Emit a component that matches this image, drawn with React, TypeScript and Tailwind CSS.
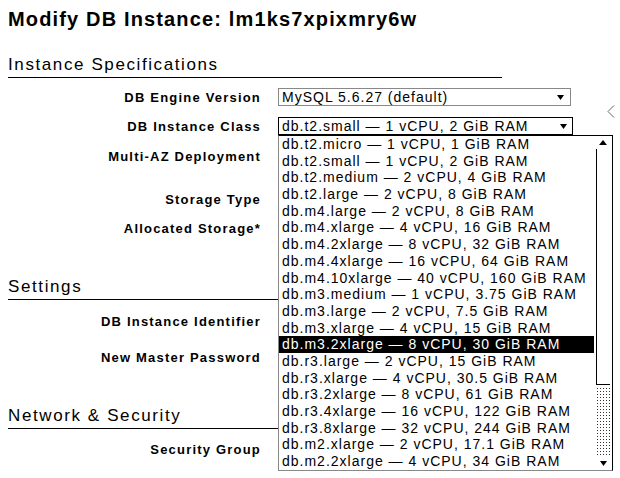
import React from 'react';

// Entrées de la liste déroulante des classes d'instance
const instanceClasses = [
  'db.t2.micro — 1 vCPU, 1 GiB RAM',
  'db.t2.small — 1 vCPU, 2 GiB RAM',
  'db.t2.medium — 2 vCPU, 4 GiB RAM',
  'db.t2.large — 2 vCPU, 8 GiB RAM',
  'db.m4.large — 2 vCPU, 8 GiB RAM',
  'db.m4.xlarge — 4 vCPU, 16 GiB RAM',
  'db.m4.2xlarge — 8 vCPU, 32 GiB RAM',
  'db.m4.4xlarge — 16 vCPU, 64 GiB RAM',
  'db.m4.10xlarge — 40 vCPU, 160 GiB RAM',
  'db.m3.medium — 1 vCPU, 3.75 GiB RAM',
  'db.m3.large — 2 vCPU, 7.5 GiB RAM',
  'db.m3.xlarge — 4 vCPU, 15 GiB RAM',
  'db.m3.2xlarge — 8 vCPU, 30 GiB RAM',
  'db.r3.large — 2 vCPU, 15 GiB RAM',
  'db.r3.xlarge — 4 vCPU, 30.5 GiB RAM',
  'db.r3.2xlarge — 8 vCPU, 61 GiB RAM',
  'db.r3.4xlarge — 16 vCPU, 122 GiB RAM',
  'db.r3.8xlarge — 32 vCPU, 244 GiB RAM',
  'db.m2.xlarge — 2 vCPU, 17.1 GiB RAM',
  'db.m2.2xlarge — 4 vCPU, 34 GiB RAM',
];

const SELECTED = 12;

const SectionHeader: React.FC<{ title: string; className?: string }> = ({ title, className }) => (
  <div className={`w-[494px] h-[23px] border-b border-black text-[17px] leading-[20px] tracking-[1.6px] ${className ?? ''}`}>
    {title}
  </div>
);

const FormRow: React.FC<{ label: string; className?: string; children?: React.ReactNode }> = ({ label, className, children }) => (
  <div className={`flex items-center h-[18px] ${className ?? ''}`}>
    <div className="w-[253px] pt-[2px] text-right text-[13px] font-bold tracking-[1.2px] whitespace-nowrap">{label}</div>
    <div className="ml-[17px]">{children}</div>
  </div>
);

const ArrowDown = () => (
  <svg width="7" height="5" viewBox="0 0 7 5">
    <polygon points="0,0 7,0 3.5,5" fill="#000" />
  </svg>
);

const Select: React.FC<{ value: string; className?: string }> = ({ value, className }) => (
  <div className={`h-[18px] flex items-center justify-between pl-[3px] text-[14px] tracking-[1px] whitespace-nowrap ${className ?? ''}`}>
    <span>{value}</span>
    <ArrowDown />
  </div>
);

const Dropdown = () => (
  <div className="absolute left-[278px] top-[135px] w-[335px] h-[336px] flex bg-white border border-black border-l-[#888] border-b-[#888]">
    <div className="flex-1">
      {instanceClasses.map((item, i) => (
        <div
          key={item}
          className={`h-[16.7px] leading-[16.7px] pl-[3px] text-[14px] tracking-[1px] whitespace-nowrap ${
            i === SELECTED ? 'bg-black text-white' : ''
          }`}
        >
          {item}
        </div>
      ))}
    </div>
    <div className="w-[18px] flex flex-col">
      <div className="h-[13px] flex items-center justify-center">
        <svg width="8" height="5" viewBox="0 0 8 5">
          <polygon points="0,5 8,5 4,0" fill="#000" />
        </svg>
      </div>
      <div className="h-[236px] mx-[2px] border-l border-b border-black" />
      <div className="flex-1 mx-[2px] mt-[2px] bg-[radial-gradient(#333_0.9px,transparent_0.9px)] bg-[length:3px_3px]" />
      <div className="h-[13px] flex items-center justify-center">
        <ArrowDown />
      </div>
    </div>
  </div>
);

export default function App() {
  return (
    <div className="relative w-[620px] h-[478px] overflow-hidden bg-white text-black font-['Liberation_Sans',Arial,sans-serif]">
      <div className="px-2">
        <h1 className="pt-2 text-[20px] leading-[22px] font-bold tracking-[1.15px] whitespace-nowrap">
          Modify DB Instance: lm1ks7xpixmry6w
        </h1>

        <SectionHeader title="Instance Specifications" className="mt-[25px]" />
        <FormRow label="DB Engine Version" className="mt-[10px]">
          <Select value="MySQL 5.6.27 (default)" className="w-[293px] pr-[6px] border border-[#888]" />
        </FormRow>
        <FormRow label="DB Instance Class" className="mt-[11px]">
          <Select value="db.t2.small — 1 vCPU, 2 GiB RAM" className="w-[295px] pr-[5px] border border-black" />
        </FormRow>
        <FormRow label="Multi-AZ Deployment" className="mt-[12px]" />
        <FormRow label="Storage Type" className="mt-[25px]" />
        <FormRow label="Allocated Storage*" className="mt-[11px]" />

        <SectionHeader title="Settings" className="mt-[40px]" />
        <FormRow label="DB Instance Identifier" className="mt-[12px]" />
        <FormRow label="New Master Password" className="mt-[18px]" />

        <SectionHeader title="Network & Security" className="mt-[40px]" />
        <FormRow label="Security Group" className="mt-[11px]" />
      </div>

      <Dropdown />

      <svg className="absolute left-[607px] top-[105px]" width="8" height="13" viewBox="0 0 8 13">
        <polyline points="7,0.5 1,6.5 7,12.5" fill="none" stroke="#666" strokeWidth="1" />
      </svg>
    </div>
  );
}
